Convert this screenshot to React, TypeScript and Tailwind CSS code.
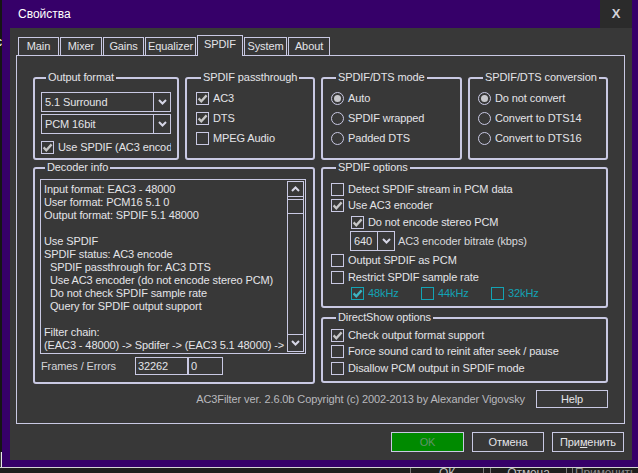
const LINE = 'border-[#c9c9e3]';

const TABS = [
  { label: 'Main', w: 'w-[41px]' },
  { label: 'Mixer', w: 'w-[42px]' },
  { label: 'Gains', w: 'w-[41px]' },
  { label: 'Equalizer', w: 'w-[51px]' },
  { label: 'SPDIF', w: 'w-[46px]', active: true },
  { label: 'System', w: 'w-[43px]' },
  { label: 'About', w: 'w-[42px]' },
];

const DECODER_INFO = [
  'Input format: EAC3 - 48000',
  'User format: PCM16 5.1 0',
  'Output format: SPDIF 5.1 48000',
  '',
  'Use SPDIF',
  'SPDIF status: AC3 encode',
  '  SPDIF passthrough for: AC3 DTS',
  '  Use AC3 encoder (do not encode stereo PCM)',
  '  Do not check SPDIF sample rate',
  '  Query for SPDIF output support',
  '',
  'Filter chain:',
  '(EAC3 - 48000) -> Spdifer -> (EAC3 5.1 48000) ->',
];

function ChevronDown() {
  return (
    <svg width="9" height="6" viewBox="0 0 9 6">
      <path d="M1 1 L4.5 4.5 L8 1" fill="none" stroke="#d6d6e6" strokeWidth="2" />
    </svg>
  );
}

function ChevronUp() {
  return (
    <svg width="9" height="6" viewBox="0 0 9 6">
      <path d="M1 5 L4.5 1.5 L8 5" fill="none" stroke="#d6d6e6" strokeWidth="2" />
    </svg>
  );
}

function Check({ on, teal }: { on?: boolean; teal?: boolean }) {
  return (
    <span
      className={`flex h-[13px] w-[13px] shrink-0 items-center justify-center border ${
        teal ? 'border-[#13a3b5]' : LINE
      }`}
    >
      {on && (
        <svg width="11" height="11" viewBox="0 0 11 11">
          <path
            d="M1.6 5.4 L4.3 8.2 L9.6 2.4"
            fill="none"
            stroke={teal ? '#3fb3c2' : '#c6c6c6'}
            strokeWidth="2.3"
          />
        </svg>
      )}
    </span>
  );
}

function Radio({ on }: { on?: boolean }) {
  return (
    <span className={`flex h-[13px] w-[13px] shrink-0 items-center justify-center rounded-full border ${LINE}`}>
      {on && <span className="h-[7px] w-[7px] rounded-full bg-[#c8c8cc]" />}
    </span>
  );
}

function Combo({ value, className = '' }: { value: string; className?: string }) {
  return (
    <div className={`flex h-[20px] border ${LINE} ${className}`}>
      <span className="flex flex-1 items-center px-[3px]">{value}</span>
      <span className={`flex w-[17px] items-center justify-center border-l ${LINE}`}>
        <ChevronDown />
      </span>
    </div>
  );
}

function Group({
  title,
  className = '',
  children,
}: {
  title: string;
  className?: string;
  children: React.ReactNode;
}) {
  return (
    <fieldset className={`min-w-0 shrink-0 rounded-[3px] border-2 ${LINE} ${className}`}>
      <legend className="ml-[5px] whitespace-nowrap px-[2px] leading-[13px]">{title}</legend>
      {children}
    </fieldset>
  );
}

function CheckRow({
  label,
  on,
  className = '',
}: {
  label: string;
  on?: boolean;
  className?: string;
}) {
  return (
    <div className={`flex items-center gap-[4px] whitespace-nowrap ${className}`}>
      <Check on={on} />
      <span>{label}</span>
    </div>
  );
}

function RadioRow({ label, on }: { label: string; on?: boolean }) {
  return (
    <div className="flex h-[20px] items-center gap-[4px] whitespace-nowrap">
      <Radio on={on} />
      <span>{label}</span>
    </div>
  );
}

export default function App() {
  return (
    <div className="flex h-[473px] w-[638px] flex-col overflow-hidden bg-[#161616] font-['Liberation_Sans',Arial,sans-serif] text-[11px] tracking-[-0.1px] text-[#e4e4e8]">
      <div className="flex h-[467px]">
        {/* window behind, left edge */}
        <div className="flex w-[4px] flex-col">
          <div className="flex-1 overflow-hidden bg-[#151515]">
            <span className="-ml-[4px] mt-[33px] block text-[12px] text-white">с</span>
          </div>
          <div className="h-[15px] border-r border-[#e8e8e8] bg-[#3a3a3a]" />
        </div>

        {/* dialog */}
        <div className="flex flex-1 flex-col bg-[#360069] pb-[7px] pl-[8px] pr-[6px]">
          <div className="flex h-[28px] shrink-0 items-center">
            <span className="flex-1 pl-[8px] text-[12px] tracking-normal text-white">Свойства</span>
            <span className="flex h-[28px] w-[32px] items-center justify-center bg-[#2b2b2b] text-[13px] font-bold tracking-normal text-[#d2d2d8]">
              X
            </span>
          </div>

          <div className="flex flex-1 flex-col bg-[#383838] pb-[8px] pl-[6px] pr-[7px] pt-[7px]">
            {/* tabs */}
            <div className="flex h-[20px] items-end gap-[1px] pl-[2px]">
              {TABS.map((t) =>
                t.active ? (
                  <div
                    key={t.label}
                    className={`relative z-10 -mb-[1px] flex h-[21px] ${t.w} justify-center border border-b-0 ${LINE} bg-[#383838] pt-[2px] leading-[13px]`}
                  >
                    {t.label}
                  </div>
                ) : (
                  <div
                    key={t.label}
                    className={`flex h-[18px] ${t.w} items-center justify-center border border-b-0 ${LINE}`}
                  >
                    {t.label}
                  </div>
                ),
              )}
            </div>

            {/* tab page */}
            <div className={`flex h-[369px] flex-col border ${LINE} px-[16px] pb-[15px] pt-[15px]`}>
              <div className="flex h-[89px] gap-[6px]">
                <Group title="Output format" className="h-[89px] w-[146px] px-[6px]">
                  <div className="flex flex-col gap-[2px] pt-[8px]">
                    <Combo value="5.1 Surround" />
                    <Combo value="PCM 16bit" />
                    <CheckRow on label="Use SPDIF (AC3 encoder)" className="mt-[1px] h-[20px] overflow-hidden" />
                  </div>
                </Group>

                <Group title="SPDIF passthrough" className="h-[89px] w-[130px] px-[9px]">
                  <div className="pt-[4px]">
                    <CheckRow on label="AC3" className="h-[20px]" />
                    <CheckRow on label="DTS" className="h-[20px]" />
                    <CheckRow label="MPEG Audio" className="h-[20px]" />
                  </div>
                </Group>

                <Group title="SPDIF/DTS mode" className="h-[89px] w-[141px] px-[8px]">
                  <div className="pt-[4px]">
                    <RadioRow on label="Auto" />
                    <RadioRow label="SPDIF wrapped" />
                    <RadioRow label="Padded DTS" />
                  </div>
                </Group>

                <Group title="SPDIF/DTS conversion" className="h-[89px] w-[140px] px-[8px]">
                  <div className="pt-[4px]">
                    <RadioRow on label="Do not convert" />
                    <RadioRow label="Convert to DTS14" />
                    <RadioRow label="Convert to DTS16" />
                  </div>
                </Group>
              </div>

              <div className="mt-[1px] flex h-[223px] gap-[6px]">
                <Group title="Decoder info" className="h-[223px] w-[282px] pl-[5px] pr-[7px]">
                  <div className="pt-[5px]">
                    <div className={`flex h-[175px] border ${LINE}`}>
                      <div className="min-w-0 flex-1 overflow-hidden whitespace-pre pl-[3px] pt-[3px] leading-[13px]">
                        {DECODER_INFO.map((line, i) => (
                          <div key={i} className="h-[13px]">
                            {line}
                          </div>
                        ))}
                      </div>
                      <div className={`my-[1px] mr-[1px] flex w-[17px] shrink-0 flex-col border ${LINE}`}>
                        <div className={`flex h-[15px] items-center justify-center border-b ${LINE}`}>
                          <ChevronUp />
                        </div>
                        <div className={`mt-[2px] h-[15px] border-y ${LINE}`} />
                        <div className="flex-1" />
                        <div className={`flex h-[17px] items-center justify-center border-t ${LINE}`}>
                          <ChevronDown />
                        </div>
                      </div>
                    </div>
                    <div className="mt-[3px] flex h-[18px] items-center">
                      <span className="w-[95px] pl-[1px] text-[#d4d4d8]">Frames / Errors</span>
                      <span className={`flex h-full w-[53px] items-center border ${LINE} pl-[2px]`}>32262</span>
                      <span className={`flex h-full w-[35px] items-center border ${LINE} pl-[2px]`}>0</span>
                    </div>
                  </div>
                </Group>

                <div className="flex w-[287px] flex-col gap-[3px]">
                  <Group title="SPDIF options" className="h-[147px] w-[287px] pl-[8px]">
                    <div className="pt-[7px]">
                      <CheckRow label="Detect SPDIF stream in PCM data" className="h-[16px]" />
                      <CheckRow on label="Use AC3 encoder" className="h-[16px]" />
                      <CheckRow on label="Do not encode stereo PCM" className="h-[18px] pl-[20px]" />
                      <div className="flex h-[20px] items-center pl-[19px]">
                        <Combo value="640" className="w-[45px]" />
                        <span className="ml-[3px] text-[#d8d8dc]">AC3 encoder bitrate (kbps)</span>
                      </div>
                      <CheckRow label="Output SPDIF as PCM" className="h-[18px]" />
                      <CheckRow label="Restrict SPDIF sample rate" className="h-[16px]" />
                      <div className="flex h-[16px] items-center pl-[20px] text-[#13a3b5]">
                        <div className="flex w-[70px] items-center gap-[4px]">
                          <Check on teal />
                          <span>48kHz</span>
                        </div>
                        <div className="flex w-[70px] items-center gap-[4px]">
                          <Check teal />
                          <span>44kHz</span>
                        </div>
                        <div className="flex w-[70px] items-center gap-[4px]">
                          <Check teal />
                          <span>32kHz</span>
                        </div>
                      </div>
                    </div>
                  </Group>

                  <Group title="DirectShow options" className="h-[72px] w-[287px] pl-[8px]">
                    <div className="pt-[3px]">
                      <CheckRow on label="Check output format support" className="h-[16px]" />
                      <CheckRow label="Force sound card to reinit after seek / pause" className="h-[17px]" />
                      <CheckRow label="Disallow PCM output in SPDIF mode" className="h-[16px]" />
                    </div>
                  </Group>
                </div>
              </div>

              <div className="mt-[6px] flex h-[18px] items-center justify-end gap-[11px]">
                <span className="text-[#b9b9bd]">
                  AC3Filter ver. 2.6.0b Copyright (c) 2002-2013 by Alexander Vigovsky
                </span>
                <span className={`flex h-[18px] w-[72px] items-center justify-center border ${LINE}`}>Help</span>
              </div>
            </div>

            {/* dialog buttons */}
            <div className="mt-[8px] flex h-[20px] justify-end gap-[8px] pr-[1px]">
              <span className="flex w-[73px] items-center justify-center border border-[#c9c9e3] bg-[#008a00] text-[#62936a]">
                OK
              </span>
              <span className={`flex w-[72px] items-center justify-center border ${LINE}`}>Отмена</span>
              <span className={`flex w-[72px] items-center justify-center border ${LINE}`}>
                При<span className="underline">м</span>енить
              </span>
            </div>
          </div>
        </div>
      </div>

      {/* window behind, bottom edge */}
      <div className="flex h-[6px] overflow-hidden border-t border-[#d4d4d4] bg-[#1e1e1e] pl-[410px] text-[12px] text-[#bdbdbd]">
        <div className="flex w-[74px] justify-center border-x border-[#7a7a7a]">
          <span className="-mt-[1px] leading-[13px]">ОК</span>
        </div>
        <div className="ml-[6px] flex w-[77px] justify-center border-x border-[#7a7a7a]">
          <span className="-mt-[1px] leading-[13px]">Отмена</span>
        </div>
        <div className="ml-[5px] flex flex-1 justify-center border-l border-[#7a7a7a]">
          <span className="-mt-[1px] leading-[13px] text-[#8a8a8a]">Применить</span>
        </div>
      </div>
    </div>
  );
}
